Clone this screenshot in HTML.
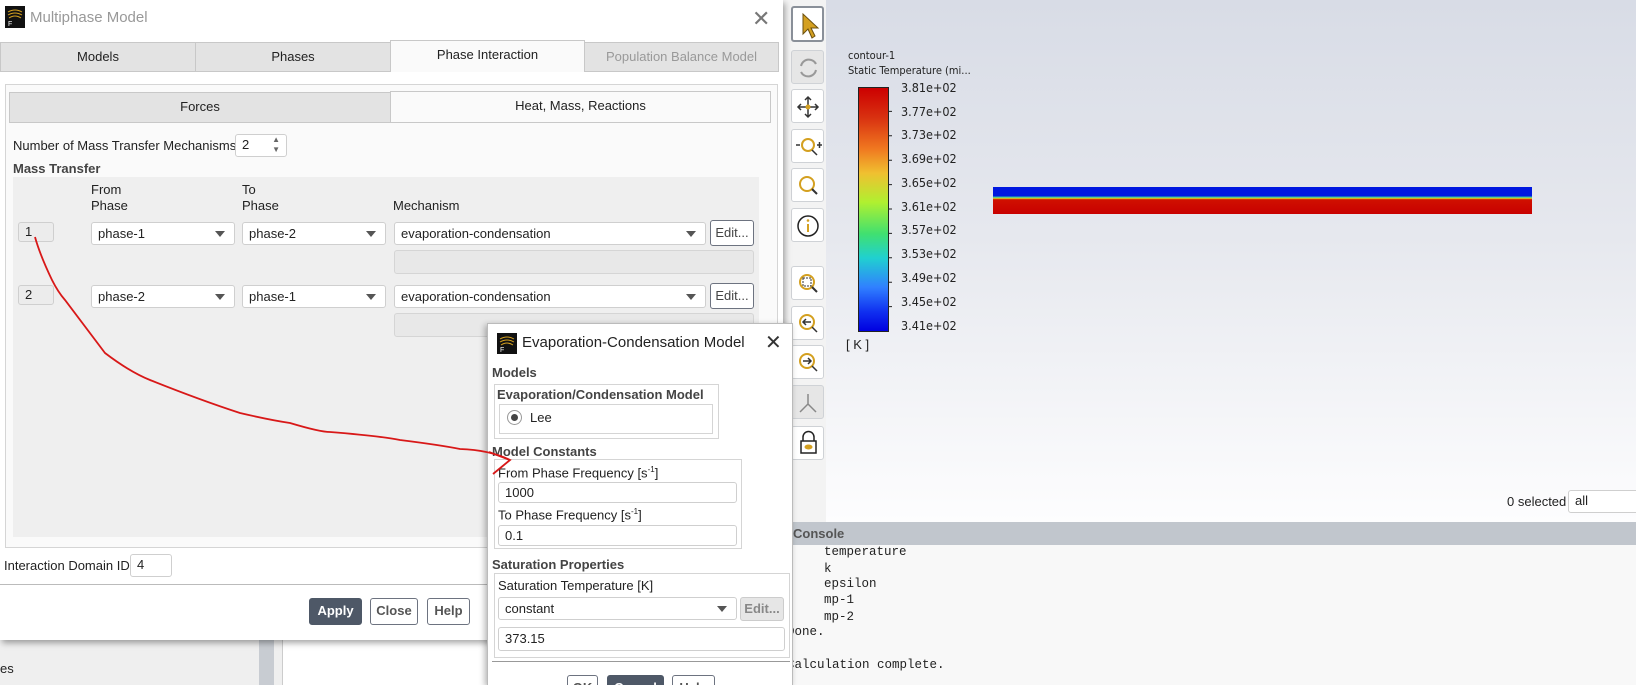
<!DOCTYPE html>
<html style="width:1636px;height:685px;overflow:hidden"><head><meta charset="utf-8"><style>
*{box-sizing:border-box;margin:0;padding:0}
body{width:1636px;height:685px;overflow:hidden;position:relative;background:#fff;font-family:"Liberation Sans",sans-serif;font-size:13px;color:#222}
.a{position:absolute}
.tab{position:absolute;background:#e3e3e3;border:1px solid #c8c8c8;text-align:center;line-height:28px;font-size:13px}
.cb{position:absolute;background:#fff;border:1px solid #cfcfcf;border-radius:3px;height:23px;line-height:21px;padding-left:6px;font-size:13px}
.cb:after{content:"";position:absolute;right:9px;top:8px;border-left:5px solid transparent;border-right:5px solid transparent;border-top:6px solid #555}
.in{position:absolute;background:#fff;border:1px solid #cfcfcf;border-radius:3px;height:22px;line-height:20px;padding-left:6px;font-size:13px}
.btn{position:absolute;border:1px solid #6d7380;border-radius:3px;background:#fff;text-align:center;font-weight:bold;color:#555;font-size:13px;line-height:24px}
.tb{position:absolute;left:791px;width:33px;height:34px;border:1px solid #cfd2d6;border-radius:3px;background:#fff}
.lab{position:absolute;left:901px;font-size:12.5px;color:#222;font-family:"DejaVu Sans Condensed","Liberation Sans",sans-serif}
.mono{font-family:"Liberation Mono",monospace;font-size:12.5px;position:absolute}
b{font-weight:bold}
</style></head><body>
<div class="a" style="left:826px;top:0;width:810px;height:522px;background:linear-gradient(#d8dce6,#e6e8ee 45%,#fdfdfe)"></div>
<div class="a" style="left:780px;top:0;width:46px;height:522px;background:#f3f3f3;border-left:1px solid #ddd"></div>
<div class="a" style="left:848px;top:49px;font-size:11px;font-family:'DejaVu Sans Condensed',sans-serif;color:#222">contour-1</div>
<div class="a" style="left:848px;top:64px;font-size:11px;font-family:'DejaVu Sans Condensed',sans-serif;color:#222">Static Temperature (mi...</div>
<div class="a" style="left:858px;top:87px;width:31px;height:245px;border:1px solid #222;background:linear-gradient(#cc0000,#d83010 12%,#f07820 25%,#f0c030 35%,#b0f030 47%,#40e070 60%,#20d0d0 70%,#3080ff 82%,#1030f0 92%,#0000e0)"></div>
<div class="lab" style="top:80px">3.81e+02</div><div class="lab" style="top:104px">3.77e+02</div><div class="lab" style="top:127px">3.73e+02</div><div class="lab" style="top:151px">3.69e+02</div><div class="lab" style="top:175px">3.65e+02</div><div class="lab" style="top:199px">3.61e+02</div><div class="lab" style="top:222px">3.57e+02</div><div class="lab" style="top:246px">3.53e+02</div><div class="lab" style="top:270px">3.49e+02</div><div class="lab" style="top:294px">3.45e+02</div><div class="lab" style="top:318px">3.41e+02</div>
<svg class="a" style="left:889px;top:87px" width="6" height="246"><path d="M0 24.4h3M0 48.8h3M0 73.2h3M0 97.6h3M0 122h3M0 146.4h3M0 170.8h3M0 195.2h3M0 219.6h3" stroke="#222"/></svg>
<div class="a" style="left:846px;top:337px;font-size:13px">[ K ]</div>
<div class="a" style="left:993px;top:187px;width:539px;height:27px;background:linear-gradient(#0018e0 0,#0018e0 33%,#40d0a0 38%,#e0d020 42%,#d01000 47%,#c80000 100%)"></div>
<div class="a" style="left:1507px;top:494px;font-size:13px">0 selected</div>
<div class="in" style="left:1568px;top:490px;width:80px;height:23px">all</div>
<div class="tb" style="top:6px;height:36px;border:2px solid #8a9099"><svg width="30" height="30" style="position:absolute;left:6px;top:4px"><path d="M4 2 L4 22 L9 17 L13 26 L16 24 L12 16 L19 16 Z" fill="#d4a020" stroke="#6b5010"/></svg></div>
<div class="tb" style="top:50px;background:#e6e6e6"><svg width="33" height="34"><path d="M9 15 A8 8 0 0 1 24 13 M24 19 A8 8 0 0 1 9 21" fill="none" stroke="#999" stroke-width="2"/></svg></div>
<div class="tb" style="top:89px"><svg width="33" height="34"><path d="M16 7 V27 M6 17 H26 M13 10 L16 7 L19 10 M13 24 L16 27 L19 24 M9 14 L6 17 L9 20 M23 14 L26 17 L23 20" stroke="#333" stroke-width="1.5" fill="none"/><circle cx="16" cy="17" r="2.5" fill="#d4a020"/></svg></div>
<div class="tb" style="top:129px"><svg width="33" height="34"><circle cx="16" cy="15" r="6" fill="none" stroke="#d4a020" stroke-width="2"/><path d="M20 20 L25 25 M4 15 H8 M25 15 H30 M27.5 12 V18" stroke="#333" stroke-width="1.5"/></svg></div>
<div class="tb" style="top:168px"><svg width="33" height="34"><circle cx="15" cy="15" r="7" fill="none" stroke="#d4a020" stroke-width="2"/><path d="M20 20 L25 25" stroke="#333" stroke-width="2"/></svg></div>
<div class="tb" style="top:208px"><svg width="33" height="34"><circle cx="16" cy="17" r="10" fill="none" stroke="#222" stroke-width="1.5"/><path d="M16 15 V23" stroke="#d4a020" stroke-width="2"/><circle cx="16" cy="11.5" r="1.3" fill="#d4a020"/></svg></div>
<div class="tb" style="top:266px"><svg width="33" height="34"><circle cx="15" cy="15" r="7" fill="none" stroke="#d4a020" stroke-width="2"/><rect x="11" y="11" width="8" height="8" fill="none" stroke="#333" stroke-dasharray="2 1"/><path d="M20 20 L25 25" stroke="#333" stroke-width="2"/></svg></div>
<div class="tb" style="top:306px"><svg width="33" height="34"><circle cx="15" cy="15" r="7" fill="none" stroke="#d4a020" stroke-width="2"/><path d="M19 15 H11 M14 12 L11 15 L14 18 M20 20 L25 25" stroke="#333" stroke-width="1.5" fill="none"/></svg></div>
<div class="tb" style="top:345px"><svg width="33" height="34"><circle cx="15" cy="15" r="7" fill="none" stroke="#d4a020" stroke-width="2"/><path d="M11 15 H19 M16 12 L19 15 L16 18 M20 20 L25 25" stroke="#333" stroke-width="1.5" fill="none"/></svg></div>
<div class="tb" style="top:385px;background:#e6e6e6"><svg width="33" height="34"><path d="M16 8 V18 L8 26 M16 18 L24 26" stroke="#888" stroke-width="1.5" fill="none"/></svg></div>
<div class="tb" style="top:426px"><svg width="33" height="34"><rect x="9" y="14" width="15" height="12" fill="none" stroke="#222" stroke-width="1.5"/><path d="M11 14 V10 A5 5 0 0 1 22 10 V14" fill="none" stroke="#222" stroke-width="1.5"/><ellipse cx="16.5" cy="20" rx="4" ry="2.5" fill="#d4a020"/></svg></div>
<div class="a" style="left:790px;top:522px;width:846px;height:23px;background:#c1c6cd;font-weight:bold;color:#555;font-size:13px;line-height:23px;padding-left:3px">Console</div>
<div class="a" style="left:790px;top:545px;width:846px;height:140px;background:#f8f8f8"></div>
<div class="mono" style="left:824px;top:545px">temperature</div>
<div class="mono" style="left:824px;top:562px">k</div>
<div class="mono" style="left:824px;top:577px">epsilon</div>
<div class="mono" style="left:824px;top:593px">mp-1</div>
<div class="mono" style="left:824px;top:610px">mp-2</div>
<div class="mono" style="left:787px;top:625px">Done.</div>
<div class="mono" style="left:787px;top:658px">Calculation complete.</div>
<div class="a" style="left:0;top:630px;width:283px;height:55px;background:#efefef;border-right:1px solid #ccc"></div>
<div class="a" style="left:259px;top:630px;width:15px;height:55px;background:#c8ccd2"></div>
<div class="a" style="left:0;top:661px;font-size:13px">es</div>
<div class="a" style="left:0;top:0;width:783px;height:640px;background:#fff;box-shadow:2px 3px 6px rgba(0,0,0,.35)"></div>
<div class="a" style="left:5px;top:6px;width:20px;height:22px;background:#111"><svg width="20" height="22"><path d="M3 6 Q10 2 17 6 M3 9 Q10 5 17 9 M4 12 Q10 8 16 12" stroke="#d4a020" fill="none"/><text x="3" y="20" font-size="7" fill="#fff" font-family="Liberation Sans">F</text></svg></div>
<div class="a" style="left:30px;top:9px;font-size:15px;color:#999">Multiphase Model</div>
<div class="a" style="left:752px;top:6px;font-size:22px;color:#777;font-weight:lighter">✕</div>
<div class="tab" style="left:0;top:42px;width:196px;height:30px">Models</div>
<div class="tab" style="left:195px;top:42px;width:196px;height:30px">Phases</div>
<div class="tab" style="left:390px;top:40px;width:195px;height:32px;background:#fafafa;border-bottom:none">Phase Interaction</div>
<div class="tab" style="left:584px;top:42px;width:195px;height:30px;color:#999">Population Balance Model</div>
<div class="a" style="left:5px;top:84px;width:773px;height:464px;border:1px solid #d5d5d5;background:#fafafa"></div>
<div class="tab" style="left:9px;top:92px;width:382px;height:31px">Forces</div>
<div class="tab" style="left:390px;top:91px;width:381px;height:32px;background:#fafafa">Heat, Mass, Reactions</div>
<div class="a" style="left:13px;top:138px">Number of Mass Transfer Mechanisms</div>
<div class="in" style="left:235px;top:134px;width:52px;height:23px">2<span style="position:absolute;right:6px;top:0;font-size:8px;line-height:10px;color:#666">▲<br>▼</span></div>
<div class="a" style="left:13px;top:161px;font-weight:bold;color:#444">Mass Transfer</div>
<div class="a" style="left:13px;top:177px;width:746px;height:360px;background:#efefef"></div>
<div class="a" style="left:91px;top:182px;line-height:16px">From<br>Phase</div>
<div class="a" style="left:242px;top:182px;line-height:16px">To<br>Phase</div>
<div class="a" style="left:393px;top:198px">Mechanism</div>
<div class="in" style="left:18px;top:222px;width:36px;height:20px;background:#ececec;line-height:18px">1</div>
<div class="cb" style="left:91px;top:222px;width:144px">phase-1</div>
<div class="cb" style="left:242px;top:222px;width:144px">phase-2</div>
<div class="cb" style="left:394px;top:222px;width:312px">evaporation-condensation</div>
<div class="btn" style="left:710px;top:220px;width:44px;height:26px;color:#444;font-weight:normal">Edit...</div>
<div class="a" style="left:394px;top:250px;width:360px;height:24px;border:1px solid #d5d5d5;border-radius:3px;background:#e8e8e8"></div>
<div class="in" style="left:18px;top:285px;width:36px;height:20px;background:#ececec;line-height:18px">2</div>
<div class="cb" style="left:91px;top:285px;width:144px">phase-2</div>
<div class="cb" style="left:242px;top:285px;width:144px">phase-1</div>
<div class="cb" style="left:394px;top:285px;width:312px">evaporation-condensation</div>
<div class="btn" style="left:710px;top:283px;width:44px;height:26px;color:#444;font-weight:normal">Edit...</div>
<div class="a" style="left:394px;top:313px;width:360px;height:24px;border:1px solid #d5d5d5;border-radius:3px;background:#e8e8e8"></div>
<div class="a" style="left:4px;top:558px">Interaction Domain ID</div>
<div class="in" style="left:130px;top:554px;width:42px;height:23px">4</div>
<div class="a" style="left:0;top:584px;width:783px;height:1px;background:#bbb"></div>
<div class="btn" style="left:309px;top:598px;width:53px;height:27px;background:#4e5867;border-color:#4e5867;color:#fff">Apply</div>
<div class="btn" style="left:370px;top:598px;width:48px;height:27px">Close</div>
<div class="btn" style="left:427px;top:598px;width:43px;height:27px">Help</div>
<div class="a" style="left:487px;top:323px;width:306px;height:362px;background:#fff;border:1px solid #bbb;border-bottom:none;box-shadow:-2px 2px 6px rgba(0,0,0,.3)"></div>
<div class="a" style="left:497px;top:333px;width:20px;height:21px;background:#111"><svg width="20" height="21"><path d="M3 6 Q10 2 17 6 M3 9 Q10 5 17 9 M4 12 Q10 8 16 12" stroke="#d4a020" fill="none"/><text x="3" y="19" font-size="7" fill="#fff" font-family="Liberation Sans">F</text></svg></div>
<div class="a" style="left:522px;top:334px;font-size:15px;color:#222">Evaporation-Condensation Model</div>
<div class="a" style="left:765px;top:330px;font-size:20px;color:#333">✕</div>
<div class="a" style="left:492px;top:365px;font-weight:bold;color:#444">Models</div>
<div class="a" style="left:494px;top:384px;width:225px;height:55px;border:1px solid #d5d5d5"></div>
<div class="a" style="left:497px;top:387px;font-weight:bold;color:#444">Evaporation/Condensation Model</div>
<div class="a" style="left:499px;top:404px;width:214px;height:30px;border:1px solid #d5d5d5"></div>
<div class="a" style="left:507px;top:410px;width:15px;height:15px;border:1px solid #999;border-radius:50%"><div class="a" style="left:3px;top:3px;width:7px;height:7px;border-radius:50%;background:#444"></div></div>
<div class="a" style="left:530px;top:410px">Lee</div>
<div class="a" style="left:492px;top:444px;font-weight:bold;color:#444">Model Constants</div>
<div class="a" style="left:494px;top:459px;width:248px;height:90px;border:1px solid #d5d5d5"></div>
<div class="a" style="left:498px;top:465px">From Phase Frequency [s<sup style="font-size:8px">-1</sup>]</div>
<div class="in" style="left:498px;top:482px;width:239px;height:21px;line-height:19px">1000</div>
<div class="a" style="left:498px;top:507px">To Phase Frequency [s<sup style="font-size:8px">-1</sup>]</div>
<div class="in" style="left:498px;top:525px;width:239px;height:21px;line-height:19px">0.1</div>
<div class="a" style="left:492px;top:557px;font-weight:bold;color:#444">Saturation Properties</div>
<div class="a" style="left:494px;top:573px;width:296px;height:85px;border:1px solid #d5d5d5"></div>
<div class="a" style="left:498px;top:578px">Saturation Temperature [K]</div>
<div class="cb" style="left:498px;top:597px;width:239px">constant</div>
<div class="btn" style="left:740px;top:597px;width:44px;height:24px;background:#e6e6e6;border-color:#ccc;color:#888;line-height:22px">Edit...</div>
<div class="in" style="left:498px;top:627px;width:287px;height:24px;line-height:22px">373.15</div>
<div class="a" style="left:492px;top:661px;width:298px;height:1px;background:#999"></div>
<div class="btn" style="left:567px;top:675px;width:31px;height:24px">OK</div>
<div class="btn" style="left:607px;top:675px;width:57px;height:24px;background:#4e5867;border-color:#4e5867;color:#fff">Cancel</div>
<div class="btn" style="left:672px;top:675px;width:43px;height:24px">Help</div>
<svg class="a" style="left:0;top:0" width="1636" height="685"><path d="M35 237 Q40 255 52 280 Q58 292 65 300 L105 353 Q130 372 150 380 Q200 400 240 413 Q270 420 290 423 Q320 432 330 432 Q380 436 400 440 Q440 445 460 449 Q490 450 510 460" fill="none" stroke="#d81818" stroke-width="1.8"/><path d="M489 452 L510 460 L493 474" fill="none" stroke="#d81818" stroke-width="1.8"/></svg>
</body></html>
